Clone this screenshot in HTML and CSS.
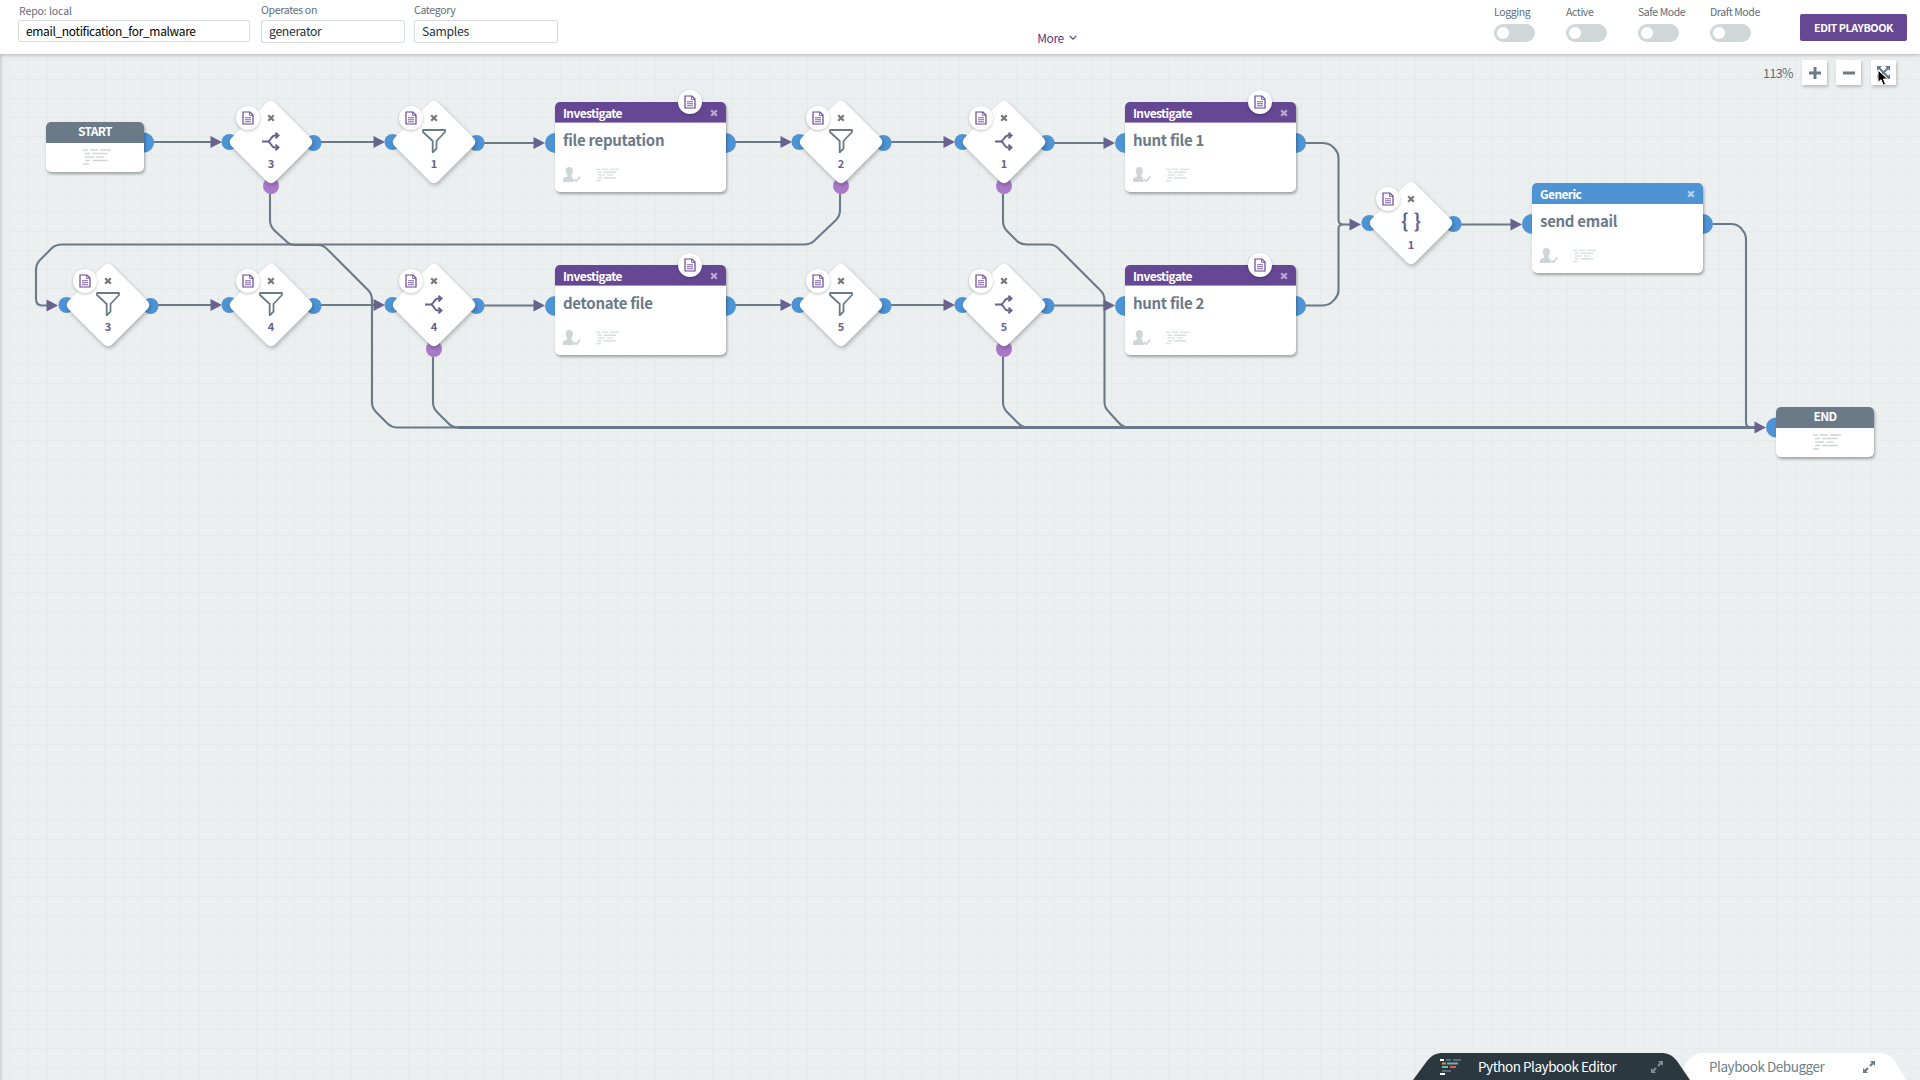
FILE: index.html
```html
<!DOCTYPE html>
<html lang="en">
<head>
<meta charset="utf-8">
<title>email_notification_for_malware</title>
<link rel="stylesheet" href="styles.css">
</head>
<body>
<header class="topbar">
  <div class="fields">
    <label class="field field-repo"><span class="field-label">Repo: local</span><span class="field-box">email_notification_for_malware</span></label>
    <label class="field"><span class="field-label">Operates on</span><span class="field-box">generator</span></label>
    <label class="field"><span class="field-label">Category</span><span class="field-box">Samples</span></label>
  </div>
  <div class="more"><span>More</span><svg width="8" height="6" viewBox="0 0 8 6"><path d="M.7.8L4 4.200 7.300.8" fill="none" stroke="currentColor" stroke-width="1.200"/></svg></div>
  <div class="actions">
    <div class="toggle"><span>Logging</span><i class="switch"></i></div>
    <div class="toggle"><span>Active</span><i class="switch"></i></div>
    <div class="toggle"><span>Safe Mode</span><i class="switch"></i></div>
    <div class="toggle"><span>Draft Mode</span><i class="switch"></i></div>
    <div class="edit">EDIT PLAYBOOK</div>
  </div>
</header>
<main class="canvas" id="canvas">
  <svg class="defs" width="0" height="0">
    <symbol id="doc" viewBox="0 0 12 14"><path d="M1 1h7l3 3v9H1z" fill="none" stroke="#664794" stroke-width="1.200"/><path d="M7.600 1v3.400H11" fill="none" stroke="#7f63a8" stroke-width="1"/><path d="M3 6.700h6M3 8.700h6M3 10.700h6" stroke="#7f63a8" stroke-width="1.100"/></symbol>
    <symbol id="x" viewBox="0 0 8 8"><path d="M1.200 1.200l5.600 5.600M6.800 1.200l-5.600 5.600" stroke="currentColor" stroke-width="2.300"/></symbol>
    <symbol id="filter" viewBox="0 0 24 24"><path d="M1 1h22v2l-8.500 9v7.500l-3.800 3.800V12L1 3z" fill="none" stroke="#6b7a88" stroke-width="1.800" stroke-linejoin="round"/></symbol>
    <symbol id="decision" viewBox="0 0 18 19"><path d="M0 9.500h6M16.500 3.500h-3.500C8.500 3.500 9.500 9.500 5.500 9.500 9.500 9.500 8.500 15.500 13 15.500h3.500M13.500.8l3 2.700-3 2.900M13.500 12.600l3 2.900-3 2.700" fill="none" stroke="#67638c" stroke-width="2"/></symbol>
    <symbol id="lines" viewBox="0 0 28 16"><path d="M0 1h5M7 1h8M17 1h11M2 4.500h5M9.500 4.500h15M2 8h9M13.500 8h7.500M2 11.500h5M9.500 11.500h15M0 15h6" stroke="#cfd6d8" stroke-width="1.500"/></symbol>
    <symbol id="user" viewBox="0 0 18 15"><path d="M6.300 0c2.300 0 3.600 1.500 3.600 3.800 0 1.800-.6 3.200-1.500 4v1.800l2 .8-1 1.300 1.300 1.300V15H0v-2.500c0-1.400 1.500-2 4.200-2.900V7.800c-.9-.8-1.500-2.200-1.500-4C2.700 1.500 4 0 6.300 0z" fill="#cdd5d6"/><path d="M11 12.200l2.200 2.100 4-4.600" fill="none" stroke="#cdd5d6" stroke-width="1.800"/></symbol>
    <symbol id="expand" viewBox="0 0 14 14"><path d="M8 1h5v5l-1.700-1.700-2.500 2.500-1.600-1.600 2.500-2.500zM6 13H1V8l1.700 1.700 2.500-2.500 1.600 1.600-2.500 2.500z" fill="currentColor"/></symbol>
  </svg>
  <svg class="wires" viewBox="0 0 1920 1080" width="1920" height="1080"><g id="wires" fill="none" stroke="#6b7a88" stroke-width="2.100"></g><path d="M458 427.500H1756" stroke="#6b7a88" stroke-width="3"/><g id="arrows" fill="#67638c"></g><g id="ports"></g></svg>
  <div class="zoombar">
    <span>113%</span>
    <div class="zoombtn"><svg width="12" height="12"><path d="M6 0v12M0 6h12" stroke="#6b7a88" stroke-width="3"/></svg></div>
    <div class="zoombtn"><svg width="12" height="12"><path d="M0 6h12" stroke="#6b7a88" stroke-width="3"/></svg></div>
    <div class="zoombtn"><svg width="13" height="13" viewBox="0 0 13 13"><path d="M2 2l9 9M11 2l-9 9" stroke="#6b7a88" stroke-width="2"/><path d="M0 0h5L0 5zM13 0v5L8 0zM0 13V8l5 5zM13 13H8l5-5z" fill="#6b7a88"/></svg></div>
  </div>
</main>
<svg class="cursor" width="13" height="18" viewBox="0 0 13 18"><path d="M1 1v12.500l3-2.800 2.200 5.600 2.500-1-2.300-5.300h4.300z" fill="#000" stroke="#fff" stroke-width="1"/></svg>
<footer class="drawers">
  <svg class="drawer-shape" width="520" height="27" viewBox="0 0 520 27"><path d="M275 27l10-15C291 3 296 0 304 0h174c8 0 14 3 18 10l10 17z" fill="#fff"/><path d="M13 27L27 8C32 2 36 0 43 0h218c7 0 11 2 16 8l13 19z" fill="#2b3840"/></svg>
  <div class="drawer-row">
    <svg width="21" height="16" viewBox="0 0 21 16" fill="none" stroke-width="2"><path d="M0 1h4M0 15h5" stroke="#fff"/><path d="M6 1h5M13 1h8M2 12h9" stroke="#5d6b75"/><path d="M2 4.500h4" stroke="#e08a4a"/><path d="M7 4.500h11M2 8h6" stroke="#62bdb0"/><path d="M10 8h6" stroke="#f0525c"/></svg>
    <span class="drawer-title">Python Playbook Editor</span>
    <svg class="drawer-expand" width="14" height="14"><use href="#expand"/></svg>
    <span class="drawer-title drawer-debug">Playbook Debugger</span>
    <svg class="drawer-expand" width="14" height="14"><use href="#expand"/></svg>
  </div>
</footer>
<script src="graph.js"></script>
</body>
</html>
```
FILE: styles.css
```css
* { box-sizing: border-box; }
body { margin: 0; width: 1920px; height: 1080px; overflow: hidden; display: flex; flex-direction: column; background: #ebeff0; font-family: "Noto Sans CJK SC", "Noto Sans", sans-serif; color: #5f6c78; }
.topbar { height: 54px; flex: none; display: flex; justify-content: space-between; background: #fff; box-shadow: 0 1px 4px rgba(0,0,0,.24); z-index: 3; padding: 0 13px 0 18px; }
.fields { display: flex; gap: 9px; padding-top: 3px; width: 602px; }
.field { display: flex; flex-direction: column; width: 144px; flex: none; gap: 2px; }
.field-repo { width: 232px; margin-right: 2px; }
.field-label { font-size: 10.500px; letter-spacing: -.3px; line-height: 14px; padding-bottom: 1px; white-space: nowrap; }
.field-repo .field-label { padding: 1px 0 0 1px; line-height: 14px; letter-spacing: -.1px; }
.field-box { border: 1px solid #d8dcdc; border-radius: 2px; height: 23px; line-height: 21px; padding-left: 7px; font-size: 12.200px; letter-spacing: -.3px; color: #23313b; white-space: nowrap; }
.field-repo .field-box { height: 22px; line-height: 19px; font-size: 12px; letter-spacing: -.35px; color: #000; }
.more { display: flex; align-items: center; gap: 5px; color: #573a85; font-size: 12px; line-height: 16px; margin-top: 22px; height: 32px; letter-spacing: -.4px; }
.actions { display: flex; width: 413px; padding-top: 4px; }
.toggle { width: 72px; flex: none; display: flex; flex-direction: column; gap: 4px; font-size: 10.500px; letter-spacing: -.4px; line-height: 16px; white-space: nowrap; }
.switch { width: 41px; height: 18px; border-radius: 9px; background: #cfd7d8; display: flex; padding: 3px; }
.switch::before { content: ""; width: 12px; height: 12px; border-radius: 50%; background: #fff; }
.edit { width: 107px; height: 27px; margin: 10px 0 0 18px; background: #664794; border-radius: 2px; color: #fff; font-size: 10.800px; letter-spacing: -.45px; font-weight: 700; line-height: 26px; text-align: center; white-space: nowrap; }
.canvas { flex: 1; border-left: 1px solid #cdd3d5; box-shadow: inset 2px 0 2px rgba(0,0,0,.05); background-color: #ebeff0; background-image: linear-gradient(90deg, #e5eaeb 1px, transparent 1px), linear-gradient(#e5eaeb 1px, transparent 1px); background-size: 19px 19px; background-position: 8px 6px; }
.defs { display: block; }
.wires { position: absolute; left: 0; top: 0; }
.zoombar { display: flex; justify-content: flex-end; align-items: center; gap: 9px; padding: 6px 24px 0 0; font-size: 12.500px; letter-spacing: -.6px; line-height: 18px; }
.zoombtn { width: 25px; height: 25px; background: #fff; box-shadow: 1px 2px 3px rgba(0,0,0,.22); display: flex; align-items: center; justify-content: center; }
.zoombtn:last-child { margin-left: 1px; }
.zoombtn svg { display: block; }
.zoombar > span { margin-top: 1px; }
.cursor { position: absolute; left: 1877px; top: 69px; z-index: 5; }
.node { position: absolute; }
.diamond { width: 84px; height: 84px; }
.diamond-shape { display: block; width: 84px; height: 84px; overflow: visible; filter: drop-shadow(1px 2px 2px rgba(0,0,0,.27)); }
.diamond-body { position: absolute; inset: 0; display: flex; flex-direction: column; align-items: center; color: #777a7c; }
.diamond-body .close { margin-top: 14px; }
.glyph { height: 24px; margin-top: 7px; display: flex; align-items: center; justify-content: center; color: #67638c; font-size: 19px; font-weight: 700; line-height: 24px; }
.glyph.format { padding-bottom: 4px; word-spacing: 1px; }
.glyph.decision { padding-right: 1px; }
.num { font-size: 11px; line-height: 16px; font-weight: 700; color: #67638c; margin-top: 2px; }
.badge { position: absolute; width: 24px; height: 24px; border-radius: 50%; background: #fff; box-shadow: 0 1px 3px rgba(0,0,0,.25); display: flex; align-items: center; justify-content: center; }
.diamond .badge { left: 7px; top: 6px; }
.card { width: 171px; height: 90px; border-radius: 5px; background: #fff; box-shadow: 1px 2px 3px rgba(0,0,0,.32); }
.card-head { height: 21px; border-radius: 5px 5px 0 0; background: #664794; border-bottom: 1px solid #a693c3; color: #fff; font-size: 12px; letter-spacing: -.6px; font-weight: 700; line-height: 21px; padding: 0 8px; display: flex; justify-content: space-between; align-items: center; }
.card-head .close { color: #b9a9cf; margin-top: 2px; }
.generic .card-head { background: #4e93d4; border-color: #4e93d4; }
.generic .close { color: #b3d2ef; }
.card-title { font-size: 15px; letter-spacing: -.3px; font-weight: 700; line-height: 22px; color: #6b7a88; padding: 6px 8px 0; white-space: nowrap; }
.card-icons { display: flex; gap: 15px; padding: 16px 8px 0; align-items: center; }
.card .badge { left: 122.500px; top: -12px; }
.term { width: 98px; height: 50px; border-radius: 5px; background: #fff; box-shadow: 1px 2px 3px rgba(0,0,0,.32); }
.term-head { height: 21px; border-radius: 5px 5px 0 0; background: #6b7a88; color: #fff; font-weight: 700; font-size: 12px; letter-spacing: -.7px; line-height: 18px; text-align: center; }
.term-body { display: flex; justify-content: center; padding: 6px 0 0 4px; }
.drawers { position: absolute; left: 1400px; bottom: 0; width: 520px; height: 27px; z-index: 4; }
.drawer-shape { position: absolute; left: 0; top: 0; }
.drawer-row { position: relative; display: flex; align-items: center; height: 27px; padding-left: 40px; }
.drawer-title { font-size: 13.500px; letter-spacing: -.47px; line-height: 27px; color: #fff; margin-left: 17px; width: 138px; white-space: nowrap; }
.drawer-debug { color: #6b7f8b; margin-left: 45px; width: 114px; }
.drawer-expand { color: #7b8e99; margin-left: 34px; }
.drawer-debug + .drawer-expand { margin-left: 39px; color: #6b7f8b; }
```
FILE: graph.js
```js
const canvas = document.getElementById('canvas');
const icon = (id, w, h, cls = '') => `<svg class="${cls}" width="${w}" height="${h}"><use href="#${id}"/></svg>`;
const badge = `<div class="badge">${icon('doc', 12, 14)}</div>`;
const ports = [];
function add(cls, x, y, html) {
  const el = document.createElement('div');
  el.className = 'node ' + cls;
  el.style.left = x + 'px';
  el.style.top = y + 'px';
  el.innerHTML = html;
  canvas.appendChild(el);
}
function diamond(cx, cy, type, n, down) {
  const glyph = type === 'filter' ? icon('filter', 24, 24) : type === 'format' ? '{ }' : icon('decision', 18, 19);
  add('diamond', cx - 42, cy - 42, `<svg class="diamond-shape" viewBox="0 0 84 84"><path d="M38 2.500Q42-1 46 2.500L81.500 38Q85 42 81.500 46L46 81.500Q42 85 38 81.500L2.500 46Q-1 42 2.500 38z" fill="#fff"/></svg><div class="diamond-body">${icon('x', 8, 8, 'close')}<div class="glyph ${type}">${glyph}</div><div class="num">${n}</div></div>${badge}`);
  ports.push([cx - 41.500, cy, 8, '#4e93d4'], [cx + 42.500, cy + 1, 8, '#4e93d4']);
  if (down) ports.push([cx, cy + 44, 8, '#a979c9']);
}
function card(x, y, kind, title) {
  const generic = kind === 'Generic';
  add('card' + (generic ? ' generic' : ''), x, y, `<div class="card-head">${kind}${icon('x', 8, 8, 'close')}</div><div class="card-title">${title}</div><div class="card-icons">${icon('user', 18, 15)}${icon('lines', 23, 14)}</div>${generic ? '' : badge}`);
  ports.push([x, y + 41, 10, '#4e93d4'], [x + 171, y + 41, 10, '#4e93d4']);
}
function terminal(x, y, text, portX) {
  add('term', x, y, `<div class="term-head">${text}</div><div class="term-body">${icon('lines', 28, 16)}</div>`);
  ports.push([portX, y + 20.500, 10, '#4e93d4']);
}
terminal(46, 122, 'START', 144);
terminal(1776, 407, 'END', 1776);
diamond(271, 142, 'decision', 3, true);
diamond(434, 142, 'filter', 1);
diamond(841, 142, 'filter', 2, true);
diamond(1004, 142, 'decision', 1, true);
diamond(1411, 223, 'format', 1);
diamond(108, 305, 'filter', 3);
diamond(271, 305, 'filter', 4);
diamond(434, 305, 'decision', 4, true);
diamond(841, 305, 'filter', 5);
diamond(1004, 305, 'decision', 5, true);
card(555, 102, 'Investigate', 'file reputation');
card(1125, 102, 'Investigate', 'hunt file 1');
card(555, 265, 'Investigate', 'detonate file');
card(1125, 265, 'Investigate', 'hunt file 2');
card(1532, 183, 'Generic', 'send email');

const wires = [
  'M153 142H213', 'M320 142H375', 'M484 143H536', 'M735 142H782', 'M891 142H945', 'M1054 143H1106',
  'M158 305H213', 'M320 305H375', 'M484 305.500H536', 'M735 305H782', 'M891 305H945', 'M1054 305.500H1106', 'M1461 224.500H1513',
  'M270 194V220Q270 226 274 230L287 242Q290 245 296 245H318Q323 245 327 249L368 290Q372 294 372 300V402Q372 408 376 412L388 424Q392 427.500 397 427.500H1756',
  'M840 194V210Q840 216 836 220L814 241Q810 244.500 804 244.500H62Q56 244.500 52 248L40 260Q36 264 36 270V299Q36 305.500 42 305.500H48',
  'M1003 194V221Q1003 227 1007 231L1018 242Q1022 244.500 1027 244.500H1049Q1055 244.500 1059 249L1100 290Q1104.500 294 1104.500 300V402Q1104.500 408 1109 412L1119 423Q1123 427.500 1129 427.500',
  'M433 357V402Q433 408 437 412L448 423Q452 427.500 458 427.500',
  'M1003 357V402Q1003 408 1007 412L1018 423Q1022 427.500 1028 427.500',
  'M1305 143H1322Q1328 143 1332 146L1335 149Q1338.500 153 1338.500 158V220Q1338.500 224.500 1343 224.500H1351',
  'M1305 305.500H1322Q1328 305.500 1332 302L1335 299Q1338.500 295 1338.500 290V229Q1338.500 224.500 1343 224.500',
  'M1713 224H1731Q1737 224 1741 228L1743 231Q1746 234 1746 240V422Q1746 427.500 1751 427.500'
];
document.getElementById('wires').innerHTML = wires.map(d => `<path d="${d}"/>`).join('');
const tips = [[222, 142], [385, 142], [545, 143], [792, 142], [955, 142], [1115, 143], [58, 305.500], [222, 305], [385, 305], [545, 305.500], [792, 305], [955, 305], [1115, 305.500], [1361, 224.500], [1522, 224.500], [1766, 427.500]];
document.getElementById('arrows').innerHTML = tips.map(([x, y]) => `<path d="M${x} ${y}l-11.500-6v12z"/>`).join('');
document.getElementById('ports').innerHTML = ports.map(([x, y, r, c]) => `<circle cx="${x}" cy="${y}" r="${r}" fill="${c}"/>`).join('');
```
